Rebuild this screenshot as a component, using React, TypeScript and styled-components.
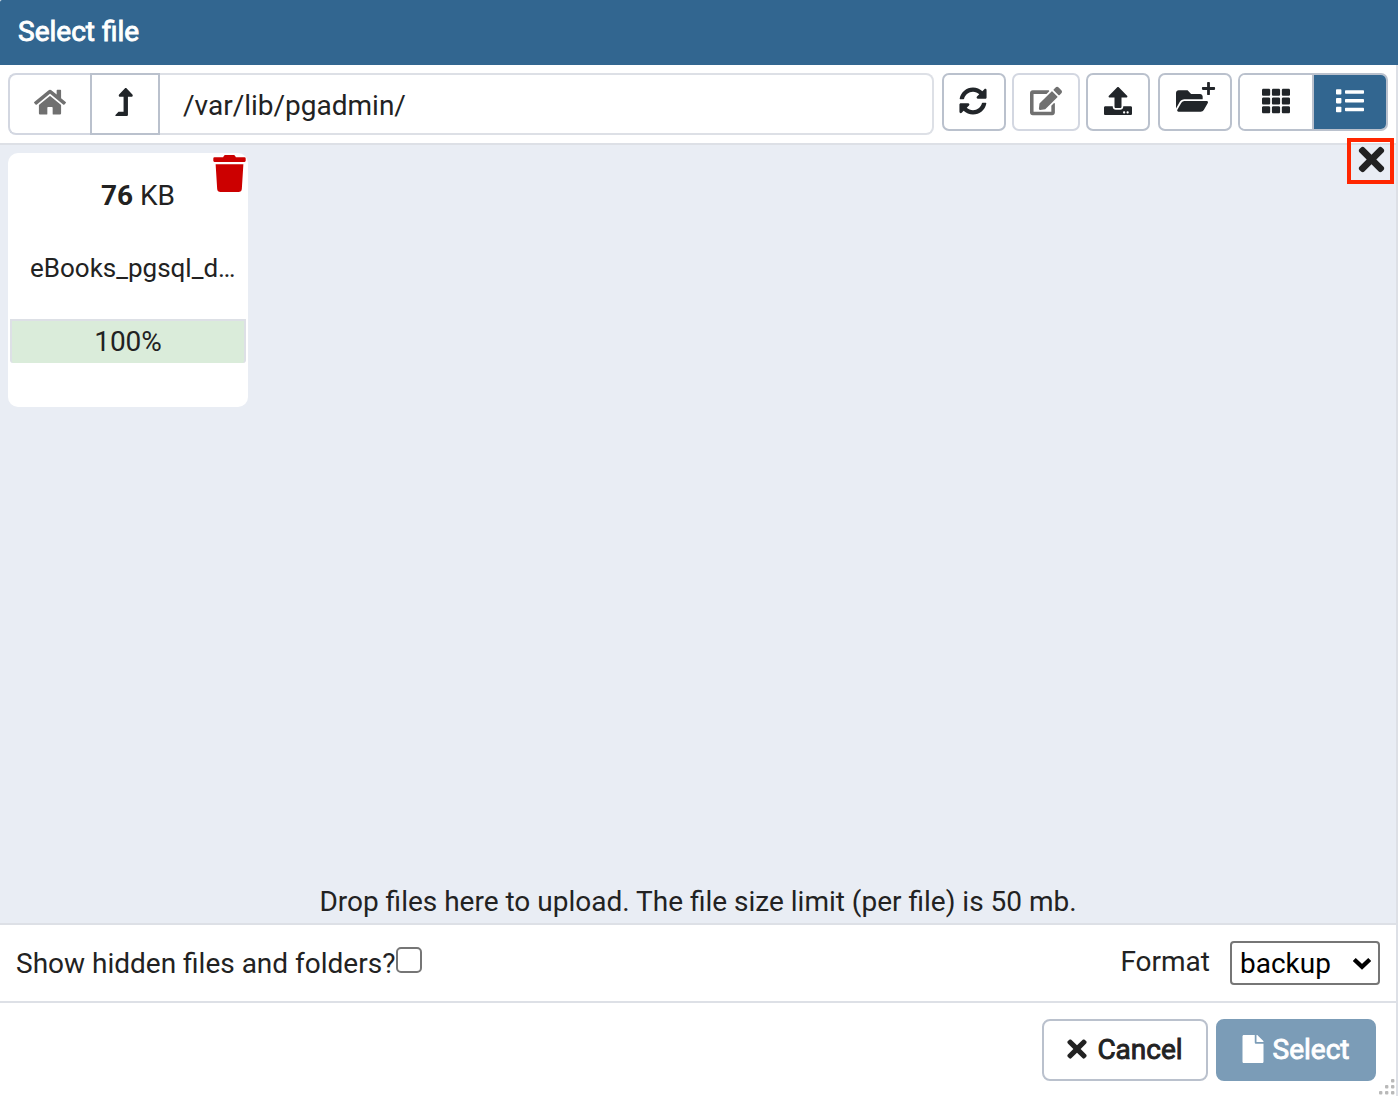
import React from 'react';
import styled, { createGlobalStyle, css } from 'styled-components';
import {
  FaLevelUpAlt, FaSyncAlt, FaEdit, FaUpload, FaFolderOpen, FaPlus,
  FaTh, FaTimes, FaTrash, FaFile,
} from 'react-icons/fa';

const color = {
  primary: '#326690',
  text: '#222222',
  line: '#dde0e6',
  button: '#bac1cd',
  canvas: '#e9edf4',
};

const GlobalStyle = createGlobalStyle`
  * { box-sizing: border-box; }
  body { margin: 0; background: #fff; }
  svg { display: block; flex: none; }
`;

const Dialog = styled.div`
  position: relative;
  width: 1398px;
  height: 1096px;
  display: flex;
  flex-direction: column;
  overflow: hidden;
  background: #fff;
  color: ${color.text};
  font: 400 28px/42px Roboto, sans-serif;
`;

const Header = styled.header`
  height: 65px;
  flex: none;
  padding: 11px 18px;
  background: ${color.primary};
  color: #fff;
  border-radius: 2px 0 0 0;
`;

const Strong = styled.span`
  -webkit-text-stroke: 0.9px currentColor;
`;

const Body = styled.div`
  flex: 1;
  min-height: 0;
  display: flex;
  flex-direction: column;
  border-right: 2px solid ${color.line};
`;

const Toolbar = styled.div`
  height: 80px;
  flex: none;
  display: flex;
  align-items: flex-start;
  padding: 8px 8px 0;
  border-bottom: 2px solid ${color.line};
`;

const PathGroup = styled.div`
  width: 926px;
  height: 62px;
  display: flex;
  margin-right: 8px;
`;

const HomeButton = styled.button`
  width: 82px;
  padding: 0 0 3px;
  display: flex;
  align-items: center;
  justify-content: center;
  border: 2px solid #d3d7e1;
  border-right: 0;
  border-radius: 8px 0 0 8px;
  background: #fff;
  color: #707070;
`;

const UpButton = styled.button`
  width: 70px;
  padding: 0 2px 4px 0;
  display: flex;
  align-items: center;
  justify-content: center;
  border: 2px solid ${color.button};
  background: #fff;
  color: #212529;
`;

const PathInput = styled.div`
  flex: 1;
  padding: 10px 23px;
  border: 2px solid ${color.line};
  border-left: 0;
  border-radius: 0 8px 8px 0;
`;

const ToolButton = styled.button<{ $w: number; $gap?: number; $shift?: number; $disabled?: boolean }>`
  position: relative;
  width: ${(p) => p.$w}px;
  height: 58px;
  padding: 0 ${(p) => p.$shift ?? 0}px 3px 0;
  margin-right: ${(p) => p.$gap ?? 6}px;
  display: flex;
  align-items: center;
  justify-content: center;
  border: 2px solid ${(p) => (p.$disabled ? '#d3d7e1' : color.button)};
  border-radius: 7px;
  background: #fff;
  color: ${(p) => (p.$disabled ? '#707070' : '#212529')};
`;

const PlusBadge = styled.span`
  position: absolute;
  left: 40.5px;
  top: 6px;
`;

const ViewSwitch = styled.div`
  width: 150px;
  height: 58px;
  display: flex;
  overflow: hidden;
  border: 2px solid ${color.button};
  border-radius: 7px;
`;

const ViewButton = styled.button<{ $active?: boolean }>`
  flex: 1;
  display: flex;
  align-items: center;
  justify-content: center;
  padding: 0 0 3px;
  border: 0;
  background: #fff;
  color: #212529;
  ${(p) => p.$active && css`
    background: ${color.primary};
    color: #fff;
    border-left: 2px solid ${color.button};
  `}
`;

const DropZone = styled.main`
  position: relative;
  flex: 1;
  display: flex;
  flex-direction: column;
  justify-content: space-between;
  padding: 8px 8px 0;
  background: ${color.canvas};
`;

const CloseBox = styled.button`
  position: absolute;
  top: -7px;
  right: 2px;
  width: 47px;
  height: 46px;
  padding: 0 0 4px 1px;
  display: flex;
  align-items: center;
  justify-content: center;
  border: 4px solid #ff2600;
  background: transparent;
  color: ${color.text};
`;

const FileCard = styled.section`
  position: relative;
  width: 240px;
  height: 254px;
  padding: 22px 2px 0;
  border-radius: 10px;
  background: #fff;
`;

const TrashButton = styled.span`
  position: absolute;
  right: 0;
  top: 2px;
  color: #cc0000;
`;

const FileSize = styled.div`
  padding-left: 20px;
  text-align: center;
  strong { font-weight: 700; }
`;

const FileName = styled.div`
  margin-top: 30px;
  padding-left: 20px;
  width: 230px;
  font-size: 26px;
  white-space: nowrap;
`;

const Progress = styled.div`
  height: 44px;
  margin-top: 30px;
  border: 2px solid ${color.line};
  border-bottom: 0;
  border-radius: 0 0 3px 3px;
  background: #daecda;
  text-align: center;
  line-height: 42px;
`;

const DropHint = styled.div`
  text-align: center;
`;

const OptionsBar = styled.div`
  height: 80px;
  flex: none;
  display: flex;
  align-items: center;
  justify-content: space-between;
  padding: 0 16px;
  border: solid ${color.line};
  border-width: 2px 0;
`;

const HiddenLabel = styled.label`
  display: flex;
  align-items: center;
`;

const HiddenText = styled.span`
  padding-top: 2px;
`;

const Checkbox = styled.span`
  width: 26px;
  height: 26px;
  margin: 0 0 6px 1px;
  border: 2px solid #767676;
  border-radius: 5px;
`;

const FormatLabel = styled.label`
  display: flex;
  align-items: center;
  gap: 20px;
`;

const FormatText = styled.span`
  padding-bottom: 2px;
`;

const SelectBox = styled.div`
  width: 150px;
  height: 44px;
  display: flex;
  align-items: center;
  justify-content: space-between;
  padding: 2px 7px 0 8px;
  border: 2px solid #767676;
  border-radius: 4px;
  color: #000;
`;

const Footer = styled.footer`
  height: 93px;
  flex: none;
  display: flex;
  justify-content: flex-end;
  gap: 8px;
  padding: 16px 20px 0 0;
`;

const FooterButton = styled.button<{ $w: number; $primary?: boolean }>`
  width: ${(p) => p.$w}px;
  height: 62px;
  display: flex;
  align-items: center;
  justify-content: center;
  gap: 6px;
  padding: 0 4px 1px 0;
  border: 2px solid ${(p) => (p.$primary ? '#7b9cb7' : color.button)};
  border-radius: 8px;
  background: ${(p) => (p.$primary ? '#7b9cb7' : '#fff')};
  color: ${(p) => (p.$primary ? '#fff' : color.text)};
  font: inherit;

  svg { margin-bottom: 2px; }
`;

const ResizeGrip = styled.svg`
  position: absolute;
  right: 2px;
  bottom: 1px;
`;

const HomeIcon = () => (
  <svg width="32" height="28.4" viewBox="0 0 576 512" fill="currentColor">
    <path d="M488 312.7V456c0 13.3-10.7 24-24 24H348c-6.6 0-12-5.4-12-12V356c0-6.6-5.4-12-12-12h-72c-6.6 0-12 5.4-12 12v112c0 6.6-5.4 12-12 12H112c-13.3 0-24-10.7-24-24V312.7c0-3.6 1.6-7 4.4-9.3l188-154.8c4.4-3.6 10.8-3.6 15.3 0l188 154.8c2.7 2.3 4.3 5.7 4.3 9.3zm83.6-60.9L488 182.9V44.4c0-6.6-5.4-12-12-12h-56c-6.6 0-12 5.4-12 12V117l-89.5-73.7c-17.7-14.6-43.3-14.6-61 0L4.4 251.8c-5.1 4.2-5.8 11.8-1.6 16.9l25.5 31c4.2 5.1 11.8 5.8 16.9 1.6l235.2-193.7c4.4-3.6 10.8-3.6 15.3 0l235.2 193.7c5.1 4.2 12.7 3.5 16.9-1.6l25.5-31c4.2-5.2 3.4-12.7-1.7-16.9z" />
  </svg>
);

const ListIcon = () => (
  <svg width="28" height="24" viewBox="0 0 28 24" fill="currentColor">
    {[0.2, 9, 17.8].map((y) => (
      <g key={y}>
        <rect x="0" y={y} width="5.4" height="5.4" rx="0.8" />
        <rect x="9" y={y + 1} width="19" height="3.5" rx="0.8" />
      </g>
    ))}
  </svg>
);

const GRIP_DOTS = [[12, 0], [6, 6], [12, 6], [0, 12], [6, 12], [12, 12]];

export default function App() {
  return (
    <Dialog>
      <GlobalStyle />
      <Header><Strong>Select file</Strong></Header>
      <Body>
        <Toolbar>
          <PathGroup>
            <HomeButton><HomeIcon /></HomeButton>
            <UpButton><FaLevelUpAlt size={28} /></UpButton>
            <PathInput>/var/lib/pgadmin/</PathInput>
          </PathGroup>
          <ToolButton $w={64} $shift={2}><FaSyncAlt size={28} /></ToolButton>
          <ToolButton $w={68} $shift={1} $disabled><FaEdit size={32} /></ToolButton>
          <ToolButton $w={64} $gap={8}><FaUpload size={28} /></ToolButton>
          <ToolButton $w={74} $shift={7}>
            <FaFolderOpen size={32} />
            <PlusBadge><FaPlus size={15} /></PlusBadge>
          </ToolButton>
          <ViewSwitch>
            <ViewButton><FaTh size={28} /></ViewButton>
            <ViewButton $active><ListIcon /></ViewButton>
          </ViewSwitch>
        </Toolbar>
        <DropZone>
          <FileCard>
            <TrashButton><FaTrash size={37} /></TrashButton>
            <FileSize><strong>76</strong> KB</FileSize>
            <FileName>eBooks_pgsql_d…</FileName>
            <Progress>100%</Progress>
          </FileCard>
          <DropHint>Drop files here to upload. The file size limit (per file) is 50 mb.</DropHint>
          <CloseBox><FaTimes size={37} /></CloseBox>
        </DropZone>
        <OptionsBar>
          <HiddenLabel><HiddenText>Show hidden files and folders?</HiddenText><Checkbox /></HiddenLabel>
          <FormatLabel>
            <FormatText>Format</FormatText>
            <SelectBox>
              backup
              <svg width="18" height="12" viewBox="0 0 18 12" fill="none" stroke="currentColor" strokeWidth="4.2">
                <path d="M1.3 1.5 9 8.8 16.7 1.5" />
              </svg>
            </SelectBox>
          </FormatLabel>
        </OptionsBar>
        <Footer>
          <FooterButton $w={166}><FaTimes size={28} /><Strong>Cancel</Strong></FooterButton>
          <FooterButton $w={160} $primary><FaFile size={28} /><Strong>Select</Strong></FooterButton>
        </Footer>
      </Body>
      <ResizeGrip width="18" height="17" fill="#b9b9b9">
        {GRIP_DOTS.map(([x, y]) => <rect key={`${x}-${y}`} x={x + 1} y={y + 1} width="3.4" height="3.4" rx="1" />)}
      </ResizeGrip>
    </Dialog>
  );
}
